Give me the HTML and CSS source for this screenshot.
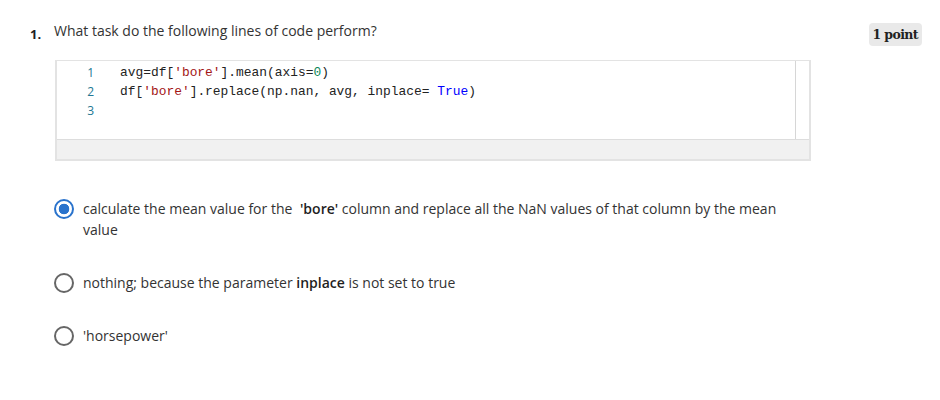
FILE: index.html
```html
<!DOCTYPE html>
<html>
<head>
<meta charset="utf-8">
<link rel="stylesheet" href="styles.css">
</head>
<body>
<div class="question">
  <div class="header">
    <span class="num">1.</span>
    <span class="prompt">What task do the following lines of code perform?</span>
    <span class="points">1 point</span>
  </div>
  <div class="code">
    <div class="editor">
      <div class="lines">
        <div class="line"><span class="ln">1</span><span class="src">avg=df[<span class="str">'bore'</span>].mean(axis=<span class="numlit">0</span>)</span></div>
        <div class="line"><span class="ln">2</span><span class="src">df[<span class="str">'bore'</span>].replace(np.nan, avg, inplace= <span class="kw">True</span>)</span></div>
        <div class="line"><span class="ln">3</span><span class="src"></span></div>
      </div>
      <div class="scroll"></div>
    </div>
    <div class="footer"></div>
  </div>
  <div class="options">
    <div class="option">
      <span class="radio checked"></span>
      <span class="label">calculate the mean value for the <b class="gap">'bore'</b> column and replace all the NaN values of that column by the mean value</span>
    </div>
    <div class="option">
      <span class="radio"></span>
      <span class="label">nothing; because the parameter <b>inplace</b> is not set to true</span>
    </div>
    <div class="option">
      <span class="radio"></span>
      <span class="label">'horsepower'</span>
    </div>
  </div>
</div>
</body>
</html>
```
FILE: styles.css
```css
html, body {
  margin: 0;
  padding: 0;
  background: #fff;
}
body {
  font-family: "Open Sans", sans-serif;
  color: #373a3c;
}
.question {
  padding: 20px 18px 0 30px;
}
.header {
  display: flex;
  align-items: flex-start;
  height: 40px;
}
.num {
  font-weight: 700;
  font-size: 13px;
  color: #1f1f1f;
  width: 24px;
  padding-top: 5px;
}
.prompt {
  flex: 1;
  font-size: 14px;
  line-height: 22px;
  color: #333;
}
.points {
  background: #e9e9e9;
  border-radius: 4px;
  font-family: "DejaVu Serif", serif;
  font-weight: 700;
  font-size: 12.5px;
  letter-spacing: -0.6px;
  line-height: 17px;
  color: #222;
  padding: 3px 4px 3px 3px;
  margin-top: 3px;
}
.code {
  margin-left: 25px;
  width: 752px;
  border: 2px solid #e3e3e3;
  border-top-width: 1px;
}
.editor {
  display: flex;
  height: 78px;
  border-bottom: 1px solid #ddd;
}
.lines {
  flex: 1;
  padding-top: 2px;
}
.line {
  display: flex;
  height: 19px;
  line-height: 19px;
  font-family: "Liberation Mono", monospace;
  font-size: 12.9px;
  color: #222;
}
.ln {
  width: 37px;
  text-align: right;
  color: #237893;
  font-family: "Open Sans", sans-serif;
  font-size: 12px;
  padding-right: 26px;
}
.str { color: #a31515; }
.kw { color: #0000ff; }
.numlit { color: #098658; }
.scroll {
  width: 13px;
  border-left: 1px solid #d6d6d6;
}
.footer {
  height: 19px;
  background: #f1f1f1;
}
.options {
  margin-left: 24px;
  padding-top: 37px;
}
.option {
  display: flex;
  align-items: flex-start;
  font-size: 14px;
  line-height: 21px;
  color: #333;
  margin-bottom: 32px;
}
.label {
  width: 710px;
}
.label b {
  color: #1f1f1f;
  font-weight: 650;
}
.label b.gap {
  margin-left: 4px;
}
.radio {
  flex: none;
  box-sizing: border-box;
  width: 20px;
  height: 20px;
  border-radius: 50%;
  border: 2px solid #666;
  margin-right: 9px;
  margin-top: 1px;
  background: #fff;
}
.radio.checked {
  border-color: #2a73cc;
  background: radial-gradient(circle, #2a73cc 0 5px, #fff 5.6px);
}
```
